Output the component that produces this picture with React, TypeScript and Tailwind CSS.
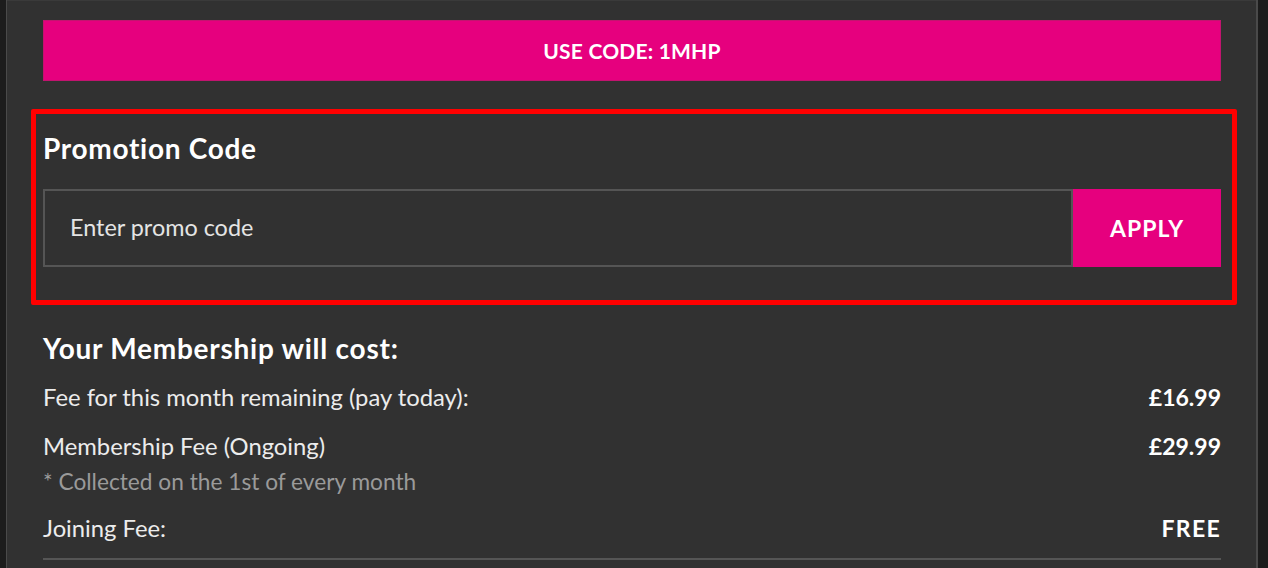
import React from "react";

export default function App() {
  const font = { fontFamily: "Lato, 'Noto Sans', sans-serif" };
  return (
    <div className="w-[1268px] h-[568px] overflow-hidden bg-[#1c1c1c] flex" style={font}>
      <div className="w-[6px] shrink-0 bg-[#1c1c1c]" />
      <div className="w-[1px] shrink-0 bg-[#4a4a4a]" />
      <div className="flex-1 bg-[#313131] border-t border-[#3a3a3a] pt-[19px] pl-[36px] pr-[35px] flex flex-col">
        <div className="h-[61px] bg-[#e6007e] border border-[#c2146f] flex items-center justify-center text-white font-bold text-[21px] tracking-[0.2px]">
          USE CODE: 1MHP
        </div>
        <div className="mt-[28px] ml-[-12px] mr-[-16px] pl-[7px] pr-[11px] border-[5px] border-[#ff0000] rounded-[2px] pt-[18px] pb-[33px]">
          <div className="h-[32px] leading-[32px] text-[28px] font-bold text-white tracking-[0.7px]">Promotion Code</div>
          <div className="mt-[25px] flex h-[78px]">
            <div className="flex-1 border-2 border-[#555555] flex items-center pl-[25px] text-[23.4px] text-[#e4e4e4]">
              Enter promo code
            </div>
            <div className="w-[148px] bg-[#e6007e] flex items-center justify-center text-white font-bold text-[23px] tracking-[1px]">
              APPLY
            </div>
          </div>
        </div>
        <div className="mt-[27px] h-[32px] leading-[32px] text-[28px] font-bold text-white tracking-[0.75px]">
          Your Membership will cost:
        </div>
        <div className="mt-[17px] flex justify-between h-[32px] leading-[32px] text-[23.8px] text-[#ececec]">
          <span>Fee for this month remaining (pay today):</span>
          <span className="font-bold text-white text-[23px]">£16.99</span>
        </div>
        <div className="mt-[17px] flex justify-between h-[32px] leading-[32px] text-[23.8px] text-[#ececec]">
          <span>Membership Fee (Ongoing)</span>
          <span className="font-bold text-white text-[23px]">£29.99</span>
        </div>
        <div className="mt-[4px] h-[32px] leading-[32px] text-[22.7px] text-[#9a9a9a]">
          * Collected on the 1st of every month
        </div>
        <div className="mt-[14px] flex justify-between h-[32px] leading-[32px] text-[23.8px] text-[#ececec]">
          <span>Joining Fee:</span>
          <span className="font-bold text-white text-[23px] tracking-[1.3px]">FREE</span>
        </div>
        <div className="mt-[14px] h-[2px] bg-[#555555]" />
      </div>
      <div className="w-[2px] shrink-0 bg-[#4a4a4a]" />
      <div className="w-[10px] shrink-0 bg-[#1c1c1c]" />
    </div>
  );
}
